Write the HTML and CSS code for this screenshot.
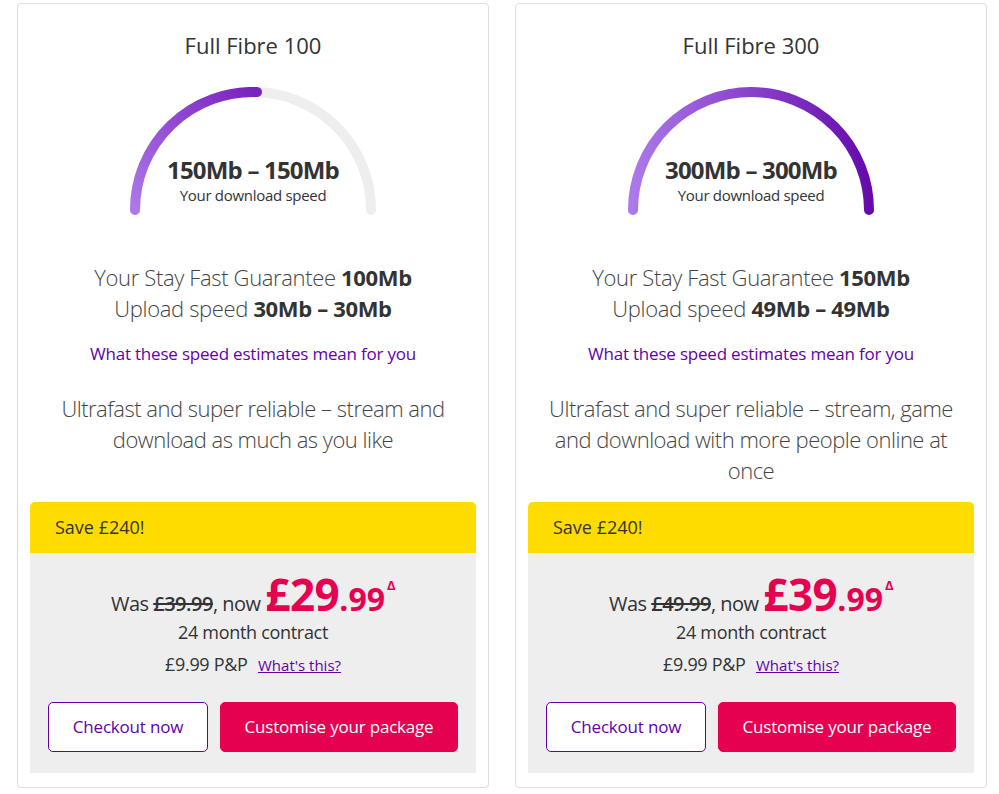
FILE: index.html
```html
<!DOCTYPE html>
<html lang="en">
<head>
<meta charset="utf-8">
<title>Full Fibre</title>
<link rel="stylesheet" href="styles.css">
</head>
<body>
<div class="page">
  <div class="card">
    <h2 class="title">Full Fibre 100</h2>
    <div class="gauge">
      <svg class="gauge-svg" viewBox="0 0 250 130" width="250" height="130">
        <defs>
          <linearGradient id="g1" gradientUnits="userSpaceOnUse" x1="7" y1="123" x2="128" y2="5">
            <stop offset="0" stop-color="#ac78ea"/>
            <stop offset="1" stop-color="#7a22c0"/>
          </linearGradient>
        </defs>
        <path d="M7 123 A118 118 0 0 1 243 123" fill="none" stroke="#eeeeee" stroke-width="10" stroke-linecap="round"/>
        <path d="M7 123 A118 118 0 0 1 129 5" fill="none" stroke="url(#g1)" stroke-width="10" stroke-linecap="round"/>
      </svg>
      <div class="gauge-text">
        <div class="speed">150Mb – 150Mb</div>
        <div class="speed-label">Your download speed</div>
      </div>
    </div>
    <p class="stats">Your Stay Fast Guarantee <b>100Mb</b><br>Upload speed <b>30Mb – 30Mb</b></p>
    <a class="estimates" href="#">What these speed estimates mean for you</a>
    <p class="desc">Ultrafast and super reliable – stream and download as much as you like</p>
    <div class="offer">
      <div class="save">Save £240!</div>
      <div class="price-box">
        <div class="price">Was <s class="old">£39.99</s>, now <span class="big">£29</span><span class="dec">.99</span><span class="delta">Δ</span></div>
        <div class="contract">24 month contract</div>
        <div class="pp">£9.99 P&amp;P <a class="whats" href="#">What's this?</a></div>
        <div class="buttons">
          <a class="btn btn-outline" href="#">Checkout now</a>
          <a class="btn btn-fill" href="#">Customise your package</a>
        </div>
      </div>
    </div>
  </div>
  <div class="card">
    <h2 class="title">Full Fibre 300</h2>
    <div class="gauge">
      <svg class="gauge-svg" viewBox="0 0 250 130" width="250" height="130">
        <defs>
          <linearGradient id="g2" gradientUnits="userSpaceOnUse" x1="7" y1="0" x2="243" y2="0">
            <stop offset="0" stop-color="#ac78ea"/>
            <stop offset="1" stop-color="#660aac"/>
          </linearGradient>
        </defs>
        <path d="M7 123 A118 118 0 0 1 243 123" fill="none" stroke="url(#g2)" stroke-width="10" stroke-linecap="round"/>
      </svg>
      <div class="gauge-text">
        <div class="speed">300Mb – 300Mb</div>
        <div class="speed-label">Your download speed</div>
      </div>
    </div>
    <p class="stats">Your Stay Fast Guarantee <b>150Mb</b><br>Upload speed <b>49Mb – 49Mb</b></p>
    <a class="estimates" href="#">What these speed estimates mean for you</a>
    <p class="desc">Ultrafast and super reliable – stream, game and download with more people online at once</p>
    <div class="offer">
      <div class="save">Save £240!</div>
      <div class="price-box">
        <div class="price">Was <s class="old">£49.99</s>, now <span class="big">£39</span><span class="dec">.99</span><span class="delta">Δ</span></div>
        <div class="contract">24 month contract</div>
        <div class="pp">£9.99 P&amp;P <a class="whats" href="#">What's this?</a></div>
        <div class="buttons">
          <a class="btn btn-outline" href="#">Checkout now</a>
          <a class="btn btn-fill" href="#">Customise your package</a>
        </div>
      </div>
    </div>
  </div>
</div>
</body>
</html>
```

FILE: styles.css
```css
* { box-sizing: border-box; }

body {
  margin: 0;
  background: #ffffff;
  font-family: "Open Sans", "Noto Sans", sans-serif;
  color: #333333;
}

.page {
  display: flex;
  gap: 26px;
  padding: 3px 12px 0 17px;
}

.card {
  width: 472px;
  border: 1px solid #dddddd;
  border-radius: 4px;
  display: flex;
  flex-direction: column;
  align-items: center;
  padding: 26px 12px 14px;
  text-align: center;
}

.title {
  margin: 0;
  font-size: 22px;
  line-height: 30px;
  font-weight: 400;
  color: #333;
}

.gauge {
  margin-top: 27px;
  width: 250px;
  height: 130px;
  display: grid;
}

.gauge-svg {
  grid-area: 1 / 1;
  display: block;
}

.gauge-text {
  grid-area: 1 / 1;
  align-self: end;
  padding-bottom: 12px;
}

.speed {
  font-size: 24px;
  line-height: 31px;
  font-weight: 700;
  color: #333;
  letter-spacing: -0.8px;
}

.speed-label {
  font-size: 15px;
  line-height: 20px;
  color: #333;
  letter-spacing: -0.3px;
}

.stats {
  margin: 45px 0 0;
  font-size: 22px;
  line-height: 31px;
  font-weight: 300;
  color: #444;
  letter-spacing: -0.35px;
}

.stats b {
  font-weight: 700;
  color: #333;
}

.estimates {
  margin-top: 18px;
  font-size: 17px;
  line-height: 24px;
  color: #6400aa;
  text-decoration: none;
  letter-spacing: -0.2px;
}

.desc {
  margin: 27px 0 0;
  padding: 0 13px;
  font-size: 22px;
  line-height: 31px;
  font-weight: 300;
  color: #444;
  letter-spacing: -0.5px;
}

.offer {
  margin-top: auto;
  width: 100%;
  padding-top: 16px;
}

.save {
  background: #ffdc00;
  border-radius: 5px 5px 0 0;
  height: 51px;
  line-height: 51px;
  text-align: left;
  padding-left: 25px;
  font-size: 18px;
  color: #333;
}

.price-box {
  background: #eeeeee;
  padding: 19px 18px 21px;
}

.price {
  line-height: 1;
  font-size: 20px;
  color: #333;
  letter-spacing: -0.5px;
}

.price .old {
  font-weight: 600;
}

.price .big {
  font-size: 44px;
  line-height: 1;
  font-weight: 700;
  color: #e60050;
  letter-spacing: -0.5px;
}

.price .dec {
  font-size: 32px;
  line-height: 1;
  font-weight: 700;
  color: #e60050;
  letter-spacing: 0;
}

.price .delta {
  font-size: 13px;
  line-height: 1;
  font-weight: 700;
  color: #e60050;
  vertical-align: 21px;
  margin-left: 2px;
}

.contract {
  margin-top: 4px;
  font-size: 18px;
  line-height: 24px;
  letter-spacing: -0.3px;
}

.pp {
  margin-top: 8px;
  font-size: 18px;
  line-height: 24px;
  letter-spacing: -0.3px;
}

.whats {
  margin-left: 6px;
  font-size: 15px;
  color: #6400aa;
  text-decoration: underline;
  letter-spacing: 0;
}

.buttons {
  margin-top: 25px;
  display: flex;
  gap: 12px;
}

.btn {
  display: block;
  height: 50px;
  line-height: 48px;
  border-radius: 5px;
  font-size: 17px;
  text-decoration: none;
  text-align: center;
  letter-spacing: -0.2px;
}

.btn-outline {
  width: 160px;
  border: 1px solid #6400aa;
  background: #ffffff;
  color: #6400aa;
}

.btn-fill {
  flex: 1;
  border: 1px solid #e60050;
  background: #e60050;
  color: #ffffff;
}
```
